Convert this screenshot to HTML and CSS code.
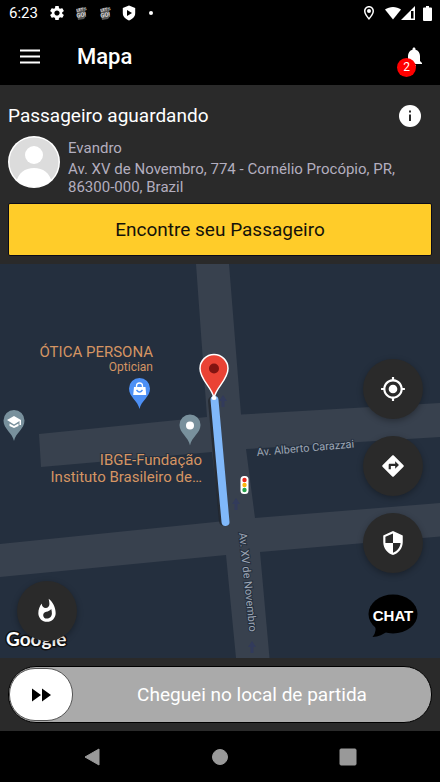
FILE: index.html
```html
<!DOCTYPE html>
<html lang="pt-BR">
<head>
<meta charset="utf-8">
<meta name="viewport" content="width=device-width, initial-scale=1">
<title>Mapa</title>
<link rel="stylesheet" href="styles.css">
</head>
<body>
<div class="status">
  <span class="clock">6:23</span>
  <div class="notices">
    <svg width="16" height="16" viewBox="1 1 22 22" fill="#fff"><path d="M19.14 12.94c.04-.3.06-.61.06-.94 0-.32-.02-.64-.07-.94l2.03-1.58c.18-.14.23-.41.12-.61l-1.92-3.32c-.12-.22-.37-.29-.59-.22l-2.39.96c-.5-.38-1.03-.7-1.62-.94l-.36-2.54c-.04-.24-.24-.41-.48-.41h-3.84c-.24 0-.43.17-.47.41l-.36 2.54c-.59.24-1.13.57-1.62.94l-2.39-.96c-.22-.08-.47 0-.59.22L2.74 8.87c-.12.21-.08.47.12.61l2.03 1.58c-.05.3-.09.63-.09.94s.02.64.07.94l-2.03 1.58c-.18.14-.23.41-.12.61l1.92 3.32c.12.22.37.29.59.22l2.39-.96c.5.38 1.03.7 1.62.94l.36 2.54c.05.24.24.41.48.41h3.84c.24 0 .44-.17.47-.41l.36-2.54c.59-.24 1.13-.56 1.62-.94l2.39.96c.22.08.47 0 .59-.22l1.92-3.32c.12-.22.07-.47-.12-.61l-2.01-1.58zM12 15.6c-1.98 0-3.6-1.62-3.6-3.6s1.62-3.6 3.6-3.6 3.6 1.62 3.6 3.6-1.62 3.6-3.6 3.6z"/></svg>
    <svg class="go" width="16" height="16" viewBox="0 0 16 16"><path d="M3 4l7-2 2 3 1 6-2 3-6 1-1-6z" fill="#555"/><g transform="rotate(-10 8 8)"><text x="4" y="6" font-size="4">LET'S</text><text x="3" y="12" font-size="6">GO!</text></g></svg>
    <svg class="go" width="16" height="16" viewBox="0 0 16 16"><path d="M3 4l7-2 2 3 1 6-2 3-6 1-1-6z" fill="#555"/><g transform="rotate(-10 8 8)"><text x="4" y="6" font-size="4">LET'S</text><text x="3" y="12" font-size="6">GO!</text></g></svg>
    <svg width="16" height="16" viewBox="0 0 16 16"><path d="M8 .500l6.200 2.500v5c0 4-3 6-6.200 7.500c-3.200-1.500-6.200-3.500-6.200-7.500V3z" fill="#fff"/><path d="M6 5l5 3-5 3z"/></svg>
    <svg width="12" height="16" viewBox="0 0 12 16"><circle cx="6" cy="8" r="2" fill="#fff"/></svg>
  </div>
  <div class="signals">
    <svg width="16" height="16" viewBox="0 0 24 24" fill="#fff"><path d="M12 1.500C7.800 1.500 4.500 4.800 4.500 9c0 5.500 7.500 13.500 7.500 13.500S19.500 14.500 19.500 9c0-4.200-3.300-7.500-7.500-7.500zm0 2.200c3 0 5.300 2.300 5.300 5.300 0 3-3 7.300-5.300 10.200C9.700 16.300 6.700 12 6.700 9c0-3 2.300-5.300 5.300-5.300z"/><circle cx="12" cy="9" r="3"/></svg>
    <svg class="wifi" width="16" height="14" viewBox="0 0 16 14"><path d="M0 3.500C4.500 0 11.500 0 16 3.500L8 13.500z" fill="#fff"/></svg>
    <svg width="14" height="14" viewBox="0 0 14 14"><path d="M14 0v14H0z" fill="#fff"/><path d="M10 5h2.500v7.500H10z"/></svg>
    <svg class="battery" width="9" height="15" viewBox="0 0 9 15"><path d="M3 0h3v1.500h2q1 0 1 1V14q0 1-1 1H1q-1 0-1-1V2.500q0-1 1-1h2z" fill="#fff"/></svg>
  </div>
</div>

<header class="appbar">
  <button class="menu" aria-label="Menu"><svg width="20" height="16" viewBox="0 0 20 16" fill="#fff"><path d="M0 .500h20v2H0zM0 6.500h20v2H0zM0 12.500h20v2H0z"/></svg></button>
  <h1>Mapa</h1>
  <button class="bell" aria-label="Notificações">
    <svg width="24" height="24" viewBox="0 0 24 24" fill="#fff"><path d="M12 22c1.100 0 2-.9 2-2h-4c0 1.100.890 2 2 2zm6-6v-5c0-3.070-1.640-5.640-4.500-6.320V4c0-.830-.670-1.500-1.500-1.500s-1.500.670-1.500 1.500v.680C7.630 5.360 6 7.920 6 11v5l-2 2v1h16v-1l-2-2z"/></svg>
    <span class="badge">2</span>
  </button>
</header>

<section class="panel">
  <div class="panel-head">
    <h2>Passageiro aguardando</h2>
    <button aria-label="Informações"><svg width="24" height="24" viewBox="0 0 24 24"><circle cx="12" cy="12" r="11" fill="#fff"/><path d="M11 6.500h2v2h-2zM11 10.500h2v6.500h-2z" fill="#2a2a2a"/></svg></button>
  </div>
  <div class="passenger">
    <svg width="52" height="52" viewBox="0 0 52 52"><clipPath id="face"><circle cx="26" cy="26" r="25"/></clipPath><circle cx="26" cy="26" r="26" fill="#fff"/><circle cx="26" cy="26" r="24.500" fill="#dcdcdc"/><g fill="#fff" clip-path="url(#face)"><circle cx="26" cy="19" r="9"/><path d="M8 47C10 37 17 32 26 32s16 5 18 15v5H8z"/></g></svg>
    <div class="details">
      <p>Evandro</p>
      <p>Av. XV de Novembro, 774 - Cornélio Procópio, PR, 86300-000, Brazil</p>
    </div>
  </div>
  <button class="find">Encontre seu Passageiro</button>
</section>

<main class="map">
  <svg class="canvas" viewBox="0 264 440 394" preserveAspectRatio="xMidYMid slice">
    <path fill="#38414e" d="M196 264H229L241 414.500L440 403V437L246 449L255 518L440 503V536.500L260 552L269.500 658H236L226 555L0 577V544L220 521.500L212 452L41 467L39 434L207 417z"/>
    <g fill="#323b5b">
      <path d="M223 395l4 6h-2.500v6h-3v-6H219z"/>
      <path d="M236 498l4 6h-2.500v6h-3v-6H232z"/>
      <path d="M252 641l4 6h-2.500v6h-3v-6H248z"/>
    </g>
    <path d="M213 401L224 521" stroke="#20242a" stroke-width="10" stroke-linecap="round" opacity=".7"/>
    <path d="M214.500 400L225.500 522" stroke="#80b8fa" stroke-width="8" stroke-linecap="round"/>
    <ellipse cx="214" cy="398" rx="2.500" ry="2" fill="#fff"/>
    <path d="M214 398C212 387 200 380 200 368.500a14 14 0 0 1 28 0C228 380 216 387 214 398z" fill="#ea4335" stroke="#fff" stroke-width="1.500"/>
    <circle cx="214" cy="368.500" r="5" fill="#811411"/>
    <g fill="#4d90f5"><path d="M139.500 409C138 401 129 397 129 388.500a10.500 10.500 0 0 1 21 0C150 397 141 401 139.500 409z"/></g>
    <path d="M134 387h11.500l.7 8h-13z" fill="#fff"/><path d="M136.500 387v-1a3 3 0 0 1 6 0v1" fill="none" stroke="#fff" stroke-width="1.300"/><path d="M136.500 390q3 4 6 0" fill="none" stroke="#4d90f5" stroke-width="1.300"/>
    <g fill="#78909c"><path d="M190 445.500C188.500 437 179.500 433 179.500 425a10.500 10.500 0 0 1 21 0C200.500 433 191.500 437 190 445.500z"/><path d="M14 441C12.500 433 3.500 429 3.500 420.500a10.500 10.500 0 0 1 21 0C24.500 429 15.500 433 14 441z"/></g>
    <circle cx="190" cy="425.500" r="4" fill="#fff"/>
    <path d="M7 420l7-4 7 4v5h-1.500v-4L14 424.500zM9.500 423.500l4.500 2.500 4.500-2.500v2.500L14 428l-4.500-2z" fill="#fff"/>
    <rect x="240.500" y="476" width="8" height="18" rx="3.500" fill="#fff"/><circle cx="244.500" cy="480" r="2.200" fill="#e8281e"/><circle cx="244.500" cy="485" r="2.200" fill="#fbb50b"/><circle cx="244.500" cy="490" r="2.200" fill="#25a14a"/>
    <g class="place">
      <text x="153" y="357" text-anchor="end">ÓTICA PERSONA</text>
      <text x="153" y="371" text-anchor="end" class="kind">Optician</text>
      <text x="202" y="465" text-anchor="end">IBGE-Fundação</text>
      <text x="202" y="482" text-anchor="end">Instituto Brasileiro de…</text>
    </g>
    <g class="street">
      <text transform="translate(257 456) rotate(-5)">Av. Alberto Carazzai</text>
      <text transform="translate(239 533) rotate(84)">Av. XV de Novembro</text>
    </g>
    <text class="google" x="6" y="646">Google</text>
  </svg>
  <button class="fab heat" aria-label="Áreas quentes"><svg width="26" height="26" viewBox="0 0 24 24"><path d="M13.500.670s.740 2.650.740 4.800c0 2.060-1.350 3.730-3.410 3.730-2.070 0-3.630-1.670-3.630-3.730l.030-.360C5.210 7.510 4 10.620 4 14c0 4.420 3.580 8 8 8s8-3.580 8-8C20 8.610 17.410 3.800 13.500.670zM11.710 19c-1.780 0-3.220-1.400-3.220-3.140 0-1.620 1.050-2.760 2.810-3.120 1.770-.360 3.600-1.210 4.620-2.580.390 1.290.590 2.650.590 4.040 0 2.650-2.150 4.800-4.800 4.800z"/></svg></button>
  <div class="tools">
    <button class="fab" aria-label="Minha localização"><svg width="26" height="26" viewBox="0 0 24 24"><path d="M12 8c-2.210 0-4 1.790-4 4s1.790 4 4 4 4-1.790 4-4-1.790-4-4-4zm8.940 3c-.460-4.170-3.770-7.480-7.940-7.940V1h-2v2.060C6.830 3.520 3.520 6.830 3.060 11H1v2h2.060c.460 4.170 3.770 7.480 7.940 7.940V23h2v-2.060c4.170-.460 7.480-3.770 7.940-7.940H23v-2h-2.060zM12 19c-3.870 0-7-3.130-7-7s3.130-7 7-7 7 3.130 7 7-3.130 7-7 7z"/></svg></button>
    <button class="fab" aria-label="Rotas"><svg width="26" height="26" viewBox="0 0 24 24"><path d="M21.710 11.290l-9-9c-.390-.390-1.020-.390-1.410 0l-9 9c-.390.390-.390 1.020 0 1.410l9 9c.390.390 1.020.390 1.410 0l9-9c.390-.380.390-1.010 0-1.410zM14 14.500V12h-4v3H8v-4c0-.550.450-1 1-1h5V7.500l3.500 3.500-3.500 3.500z"/></svg></button>
    <button class="fab" aria-label="Segurança"><svg width="26" height="26" viewBox="0 0 24 24"><path d="M12 1L3 5v6c0 5.550 3.840 10.740 9 12 5.160-1.260 9-6.450 9-12V5l-9-4zm0 10.990h7c-.530 4.120-3.280 7.790-7 8.940V12H5V6.300l7-3.110v8.800z"/></svg></button>
    <button class="chat" aria-label="Chat"><svg width="50" height="44" viewBox="0 0 50 44"><ellipse cx="25" cy="20" rx="24.500" ry="19.500"/><path d="M6 30q4 6-1.500 13q9-.5 15-6z"/><text x="25" y="27" text-anchor="middle">CHAT</text></svg></button>
  </div>
</main>

<div class="slidebar">
  <button class="slide">
    <span class="thumb"><svg width="20" height="14" viewBox="0 0 20 14"><path d="M1 .500L10 7 1 13.500zM11 .500L20 7l-9 6.500z"/></svg></span>
    <span class="slide-text">Cheguei no local de partida</span>
  </button>
</div>

<nav class="sysnav">
  <button aria-label="Voltar"><svg width="18" height="18" viewBox="0 0 18 18"><path d="M16 1v16L2 9z" stroke-width="1" stroke-linejoin="round"/></svg></button>
  <button aria-label="Início"><svg width="18" height="18" viewBox="0 0 18 18"><circle cx="9" cy="9" r="7.500"/></svg></button>
  <button aria-label="Recentes"><svg width="18" height="18" viewBox="0 0 18 18"><rect x="1" y="1" width="16" height="16" rx="1"/></svg></button>
</nav>
</body>
</html>
```
FILE: styles.css
```css
* { box-sizing: border-box; }
body {
  margin: 0;
  min-height: 100vh;
  display: flex;
  flex-direction: column;
  background: #000;
  color: #fff;
  font-family: Roboto, sans-serif;
}
h1, h2, p { margin: 0; font-weight: 400; }
button {
  padding: 0;
  border: 0;
  background: none;
  color: inherit;
  font: inherit;
  cursor: pointer;
}
svg { display: block; }

.status {
  height: 26px;
  padding: 0 8px 0 9px;
  display: flex;
  align-items: center;
}
.clock { font-size: 15px; line-height: 26px; }
.notices { display: flex; gap: 8px; margin-left: 11px; }
.go text { fill: #ddd; font-weight: 700; }
.signals { display: flex; align-items: center; margin-left: auto; }
.wifi { margin-left: 8px; }
.battery { margin-left: 8px; }

.appbar {
  height: 59px;
  padding: 2px 14px 0 20px;
  display: flex;
  align-items: center;
}
h1 {
  margin-left: 37px;
  font-size: 22px;
  font-weight: 500;
  line-height: 28px;
}
.bell { position: relative; margin-left: auto; }
.badge {
  position: absolute;
  left: -5px;
  top: 13px;
  width: 19px;
  height: 19px;
  border-radius: 50%;
  background: #f00;
  font-size: 12px;
  line-height: 19px;
}

.panel {
  padding: 18px 8px 8px;
  background: #2a2a2a;
}
.panel-head {
  display: flex;
  align-items: center;
  justify-content: space-between;
  padding-right: 10px;
}
h2 { font-size: 19px; line-height: 26px; }
.passenger { display: flex; gap: 8px; margin-top: 7px; }
.passenger svg { flex: none; }
.details {
  padding-top: 3px;
  color: #b3aebf;
  font-size: 15px;
  line-height: 18px;
}
.details p + p { margin-top: 3px; }
.find {
  display: block;
  width: 100%;
  height: 53px;
  margin-top: 7px;
  border: 1px solid #0b0b18;
  border-radius: 2px;
  background: #ffcc29;
  color: #14120a;
  font-size: 19px;
}

.map {
  position: relative;
  flex: 1;
  min-height: 380px;
  overflow: hidden;
  background: #242f3e;
}
.canvas { position: absolute; width: 100%; height: 100%; }
.place {
  fill: #d59563;
  stroke: #242f3e;
  stroke-width: 2px;
  paint-order: stroke;
  font-size: 15px;
}
.kind { font-size: 12px; }
.street {
  fill: #9ca5b3;
  stroke: #242f3e;
  stroke-width: 2px;
  paint-order: stroke;
  font-size: 11px;
}
.google {
  fill: #fff;
  stroke: #111;
  stroke-width: 3px;
  paint-order: stroke;
  font-family: Lato, sans-serif;
  font-size: 19px;
  font-weight: 700;
}
.fab {
  width: 60px;
  height: 60px;
  display: grid;
  place-items: center;
  border-radius: 50%;
  background: #2a2a2a;
  fill: #fff;
  box-shadow: 0 2px 6px rgba(0, 0, 0, .3);
}
.heat { position: absolute; left: 17px; bottom: 17px; }
.tools {
  position: absolute;
  right: 17px;
  bottom: 20px;
  display: flex;
  flex-direction: column;
  align-items: center;
  gap: 17px;
}
.chat { margin-top: 4px; }
.chat text {
  fill: #fff;
  font-family: "Liberation Sans", sans-serif;
  font-size: 15px;
  font-weight: 700;
}

.slidebar { padding: 8px; background: #2a2a2a; }
.slide {
  width: 100%;
  height: 57px;
  display: flex;
  align-items: center;
  border: 1px solid #000;
  border-radius: 28px;
  background: #aaa;
}
.thumb {
  width: 64px;
  height: 53px;
  display: grid;
  place-items: center;
  border: 1px solid #555;
  border-radius: 26px;
  background: #fff;
}
.slide-text { flex: 1; font-size: 19px; }

.sysnav {
  height: 51px;
  padding: 0 28px;
  display: grid;
  grid-template-columns: repeat(3, 1fr);
  place-items: center;
  fill: #999;
  stroke: #999;
}
```
